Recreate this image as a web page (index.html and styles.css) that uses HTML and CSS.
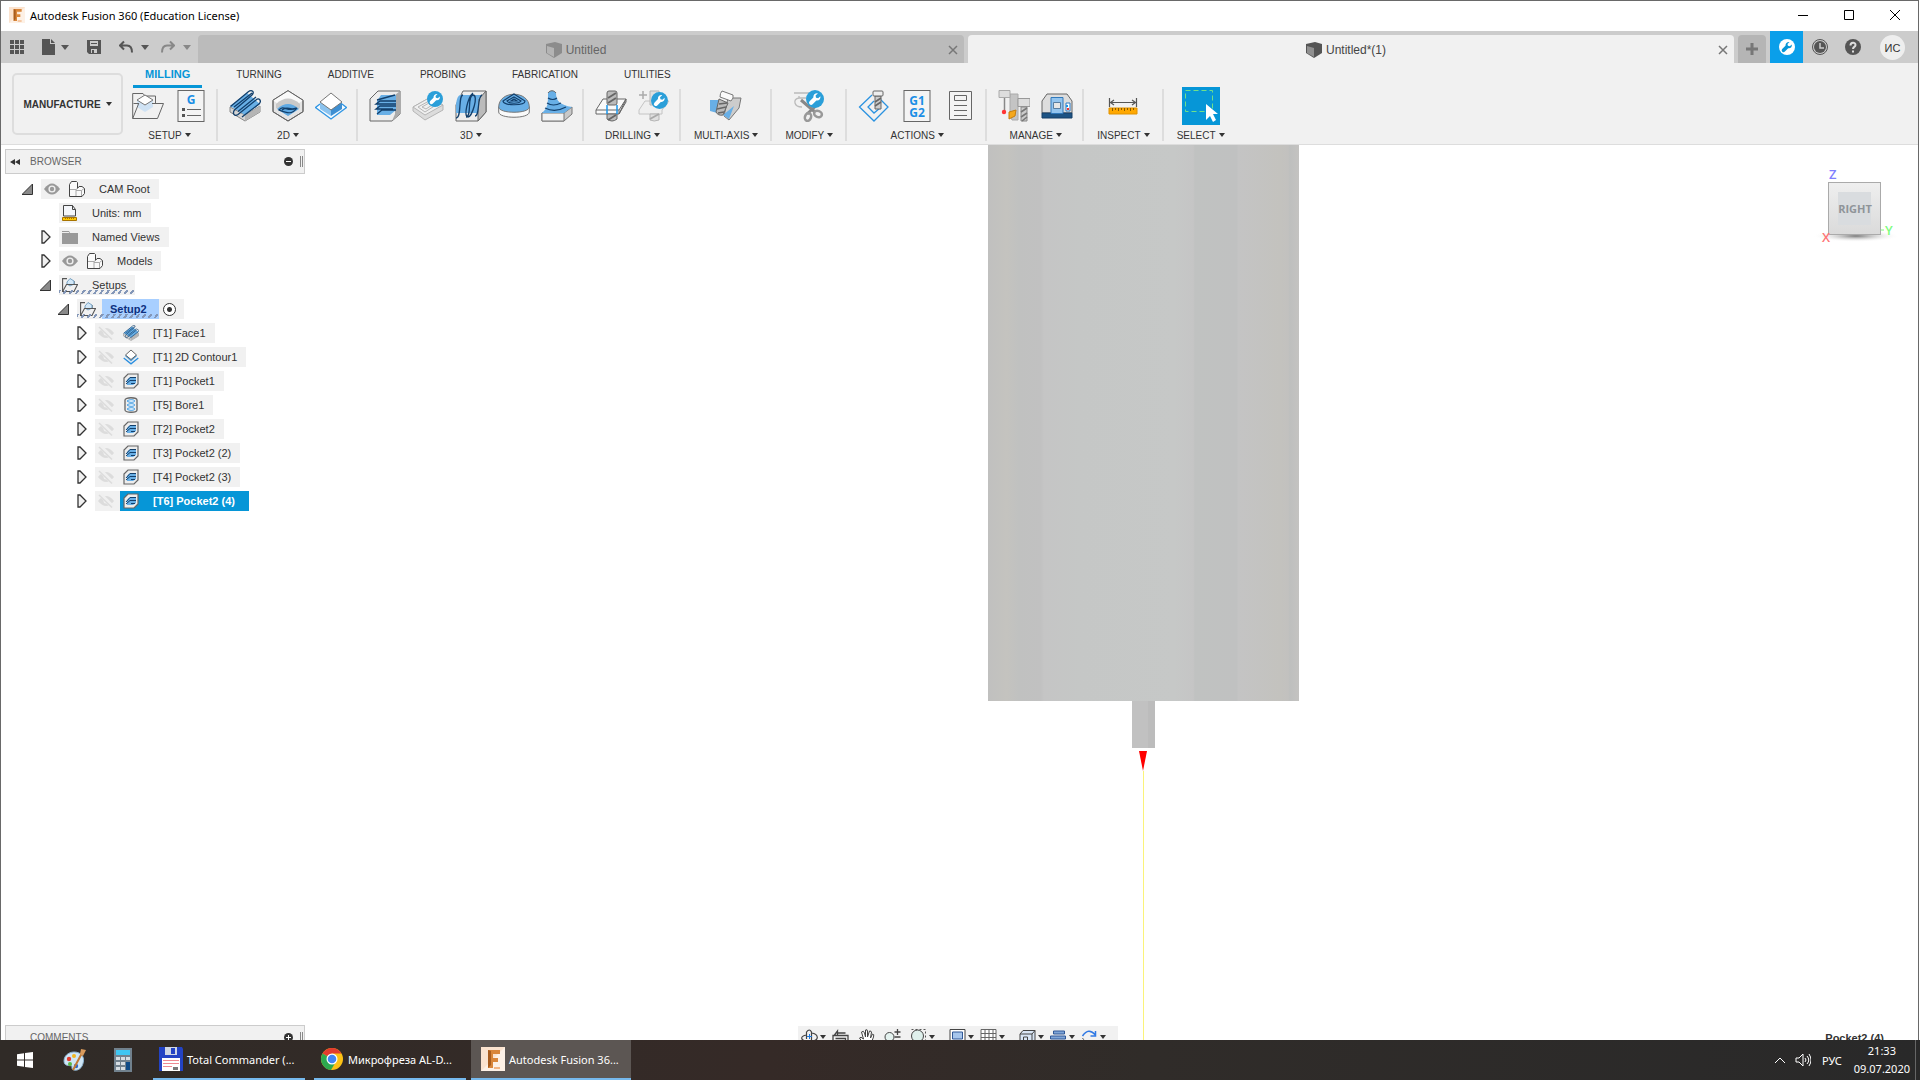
FILE: index.html
```html
<!DOCTYPE html>
<html lang="en">
<head>
    <meta charset="UTF-8">
    <meta name="viewport" content="width=device-width, initial-scale=1.0">
    <title>Autodesk Fusion 360 (Education License)</title>
    <link rel="stylesheet" href="styles.css">
</head>
<body>
    <!-- icon sprite -->
    <svg class="sprite" aria-hidden="true">
        <symbol id="i-fusion" viewBox="0 0 24 24">
            <rect width="24" height="24" fill="#fbe3cf"/>
            <path d="M0 24L24 0v24z" fill="#fdf1e6"/>
            <path d="M7 3h12v4h-7v4h5v4h-5v6H7z" fill="#d9863a"/>
            <path d="M7 3l3 1v14l-3 3z" fill="#a85c1d"/>
            <path d="M13 20h6v2h-6z" fill="#f3b684"/>
        </symbol>
        <symbol id="i-box" viewBox="0 0 16 16">
            <path d="M0 2L9 0l7 2v9l-8 5-8-5z" fill="currentColor"/>
            <path d="M1 4l7 2v9l-7-4z" fill="#fff" opacity=".35"/>
        </symbol>
        <symbol id="i-wrench" viewBox="0 0 16 16">
            <circle cx="8" cy="8" r="8" fill="#2b9fd9"/>
            <path d="M12.800 5.500l-2 1.800-1.900-.5-.4-1.900 2-1.900C8.500 2.600 6.300 4 6.500 6.700L3.200 10a1.800 1.800 0 0 0 2.700 2.600l3.300-3.300c2.600.4 4-1.700 3.600-3.800z" fill="#fff"/>
        </symbol>
        <symbol id="i-setup" viewBox="0 0 32 32">
            <path d="M.7 28.500V3.500H11l2 2.500h10.500v7" fill="none" stroke="#666"/>
            <path d="M5 10v7l8 5 8-5v-7" fill="#cfe2f4"/>
            <path d="M13 5l8 5-8 5-8-5z" fill="#fff" stroke="#777"/>
            <path d="M7 13.500H1.500M20 13.500h11.500l-6 15H.7l6-15" fill="none" stroke="#666"/>
        </symbol>
        <symbol id="i-setupsm" viewBox="0 0 16 16">
            <path d="M.6 14.400V1.600H5M12 8V4" fill="none" stroke="#555" stroke-width="1.100"/>
            <path d="M5 5l3-3.500L12 4v3L8 9 5 7z" fill="#d3e8f8" stroke="#5e8fb5" stroke-width=".8"/>
            <path d="M4.500 7.500h11l-3.500 7H.6z" fill="none" stroke="#555" stroke-width="1.100"/>
        </symbol>
        <symbol id="i-gcode" viewBox="0 0 32 32">
            <rect x="3" y=".5" width="26" height="31" fill="#f4f4f4" stroke="#666"/>
            <path d="M7 18h3v3H7zM7 24h3v3H7z" fill="#555"/>
            <path d="M12 19.500h14M12 25.500h14" stroke="#666"/>
        </symbol>
        <symbol id="i-face" viewBox="0 0 32 32">
            <path d="M1 17v5l15 9 15-9v-6L16 25z" fill="#d4d4d4" stroke="#888"/>
            <path d="M16 25v6l15-9v-6z" fill="#b5b5b5"/>
            <path d="M1 16L18 3l13 11-15 11z" fill="#68afe6"/>
            <path d="M1.500 16.500L19 2c4-3 7 0 4 3L6 19.500c-3 3-1 8 3 5L27 10c3-3 6 1 3 4L13 27M5 17L23 3M9 21.500L27 7" fill="none" stroke="#123f6b" stroke-width="1.300"/>
        </symbol>
        <symbol id="i-adaptive" viewBox="0 0 32 32">
            <path d="M16 .7l15 9.500v11.500L16 31 1 21.700V10.200z" fill="#e4e4e4" stroke="#666"/>
            <path d="M16 1l15 9.500L16 20 1 10.500z" fill="#fafafa"/>
            <path d="M4 14q12-11 24 0v4L16 26 4 18z" fill="#c9c9c9"/>
            <path d="M5 19q11-10 22 0l-11 7z" fill="#5fa9e3"/>
            <path d="M7 20c5-6 8 3 18-2-5 7-10 5-18 2zM10 20c6-5 7 1 14-2" fill="none" stroke="#123f6b" stroke-width="1.200"/>
            <path d="M16 .7l15 9.500v11.500L16 31 1 21.700V10.200z" fill="none" stroke="#666"/>
        </symbol>
        <symbol id="i-contour" viewBox="0 0 32 32">
            <path d="M5 14l-4.500 3.500L16 29l15.500-11.500L27 14" fill="#f4faff" stroke="#3196e3" stroke-width="1.300"/>
            <path d="M5 12v7l11 7V19z" fill="#8bc3ef"/>
            <path d="M27 12v7l-11 7V19z" fill="#3e8fd2"/>
            <path d="M16 3l11 9-11 8-11-8z" fill="#fff" stroke="#777"/>
        </symbol>
        <symbol id="i-contoursm" viewBox="0 0 16 16">
            <path d="M.7 9L8 14.800 15.300 9" fill="none" stroke="#2a8fe0" stroke-width="1.300"/>
            <path d="M2 7l6 5.500L14 7l-1-1H3z" fill="#4f9fdc"/>
            <path d="M8 1l5.500 5L8 10.500 2.500 6z" fill="#fff" stroke="#666"/>
        </symbol>
        <symbol id="i-pocket3d" viewBox="0 0 32 32">
            <path d="M1 31V9l8-8h22v23l-8 7z" fill="#ededed" stroke="#666"/>
            <path d="M23 31l8-7V1l-5 4v19z" fill="#aaa"/>
            <path d="M8 11l4-6h15v15l-6 5H8z" fill="#68afe6"/>
            <path d="M27 11H11l-4 3h20M27 16H11l-4 3h17M27 20H13l-5 4M8 10l18-5" fill="none" stroke="#123f6b" stroke-width="1.300"/>
        </symbol>
        <symbol id="i-pocketsm" viewBox="0 0 16 16">
            <path d="M1 15V5l4-4h10v10l-4 4z" fill="#ededed" stroke="#666" stroke-width="1.200"/>
            <path d="M4 12V7l3-3h6v6l-3 2z" fill="#68afe6"/>
            <path d="M13 4.500H7L3 9M13 7.500H7l-4 3.500M12 10.500H8" fill="none" stroke="#123f6b"/>
        </symbol>
        <symbol id="i-steep" viewBox="0 0 32 32">
            <path d="M1 21l12 9 18-10v-5L17 8 1 17z" fill="#dcdcdc" stroke="#b5b5b5"/>
            <path d="M1 17l12 8 18-10L17 8z" fill="#f0f0f0" stroke="#b5b5b5"/>
            <path d="M6 17l7 5 11-7-7-4zM10 17l4 2 6-4-3-2z" fill="none" stroke="#b5b5b5"/>
            <use href="#i-wrench" x="15" y="1" width="16" height="16"/>
        </symbol>
        <symbol id="i-parallel" viewBox="0 0 32 32">
            <path d="M1 31V15L8 1h23v21l-8 9z" fill="#ededed" stroke="#666"/>
            <path d="M23 31V10l8-9v21z" fill="#bbb" stroke="#666"/>
            <path d="M1 23V14q1-8 4-9h21q-3 3-3 9v9z" fill="#68afe6"/>
            <path d="M1 28C7 28 3 5 8 5M11 27c6 0 1-22 7-22 6 0-1 22-5 22-5 0 0-20 5-24M20 26c5 0 2-20 7-21" fill="none" stroke="#123f6b" stroke-width="1.300"/>
        </symbol>
        <symbol id="i-pencil3d" viewBox="0 0 32 32">
            <path d="M.7 17v5c0 7 30.600 7 30.600 0v-5z" fill="#fafafa" stroke="#777"/>
            <path d="M.7 17C1 0 31 0 31.300 17c0 7-30.600 7-30.600 0z" fill="#68afe6" stroke="#777"/>
            <path d="M16 4l11 7c0 5-22 5-22 0zM16 7l7 4c-2 3-12 3-14 0zM16 9l3 2h-6z" fill="none" stroke="#123f6b" stroke-width="1.200"/>
        </symbol>
        <symbol id="i-morph" viewBox="0 0 32 32">
            <path d="M1 23v8h22l8-7v-7l-8 6z" fill="#c9c9c9" stroke="#777"/>
            <path d="M1 23v8h22v-8z" fill="#f2f2f2" stroke="#777"/>
            <path d="M7 3c2-3 6-3 8 0 0 8 4 12 16 14l-8 6H1c6-5 6-10 6-20z" fill="#68afe6"/>
            <path d="M7 3c2-3 6-3 8 0" fill="none" stroke="#666"/>
            <path d="M7 8q5 3 9 0M6 13q6 4 14 0M4 18q10 5 21-1" fill="none" stroke="#123f6b" stroke-width="1.200"/>
        </symbol>
        <symbol id="i-drill" viewBox="0 0 32 32">
            <path d="M1 20L8 9h23l-7 11v4H1z" fill="#fafafa" stroke="#666"/>
            <path d="M24 20H1M24 24l7-12V9z" fill="#ccc" stroke="#666"/>
            <rect x="12" y="1" width="10" height="14" rx="2" fill="#bbb" stroke="#666"/>
            <path d="M12 24h10v5q-5 4-10 0z" fill="#bbb" stroke="#666"/>
            <path d="M13 8l8-5M13 13l8-5M13 30l8-5" stroke="#666" stroke-width="2"/>
            <path d="M12 15v9M22 15v9" stroke="#1a95ea" stroke-width="1.500"/>
        </symbol>
        <symbol id="i-drillrec" viewBox="0 0 32 32">
            <path d="M1 20l6-9h24l-7 9v4H1z" fill="#efefef" stroke="#c4c4c4"/>
            <path d="M5 1v8M1 5h8" stroke="#aaa" stroke-width="1.500"/>
            <path d="M12 1h9v14h-9zM12 24h9v6q-5 2-9 0z" fill="#e0e0e0" stroke="#b5b5b5"/>
            <path d="M12 29l9-5" stroke="#aaa" stroke-width="2"/>
            <use href="#i-wrench" x="13" y="2" width="17" height="17"/>
        </symbol>
        <symbol id="i-multi" viewBox="0 0 32 32">
            <path d="M0 10h11v14l-11-3z" fill="#68afe6"/>
            <path d="M18 8h13l-2 10-10 12-5-4z" fill="#ccc" stroke="#777"/>
            <path d="M13 25l11-9-5 13z" fill="#68afe6"/>
            <path d="M9 9l9 4-5 12q-5 1-7-3z" fill="#bbb" stroke="#666"/>
            <path d="M7 19l9-2M9 14l8-1M8 23l6-1" stroke="#666" stroke-width="1.600"/>
            <path d="M12 1l11 4q1 3-2 6L10 7q0-4 2-6z" fill="#fafafa" stroke="#777"/>
        </symbol>
        <symbol id="i-modify" viewBox="0 0 32 32">
            <path d="M1 3h15M13 8H6q-5 1-4 5t7 4M6 6v2h2" fill="none" stroke="#bbb" stroke-width="1.300"/>
            <path d="M8 10l14 12M25 14L14 24" stroke="#888" stroke-width="3"/>
            <ellipse cx="15" cy="27" rx="3" ry="4" fill="none" stroke="#999" stroke-width="2.500" transform="rotate(20 15 27)"/>
            <ellipse cx="25" cy="24" rx="4" ry="3" fill="none" stroke="#999" stroke-width="2.500" transform="rotate(20 25 24)"/>
            <use href="#i-wrench" x="13" y="0" width="18" height="18"/>
        </symbol>
        <symbol id="i-simulate" viewBox="0 0 32 32">
            <path d="M14 5L1.500 17 16 31l14-14-8-8M16 11l-6 6 6 6 6-5" fill="none" stroke="#2a92e0" stroke-width="1.300"/>
            <path d="M17 6h6v13h-6z" fill="#ccc" stroke="#666"/>
            <path d="M17 12l6-4M17 16l6-4" stroke="#666" stroke-width="1.600"/>
            <rect x="15" y="1" width="10" height="5" rx="1" fill="#eee" stroke="#666"/>
        </symbol>
        <symbol id="i-sheet" viewBox="0 0 32 32">
            <path d="M5.500 1.500h22v28h-22z" fill="#f4f4f4" stroke="#666"/>
            <path d="M10.500 5.500h12v5h-12zM10 15.500h13M10 20.500h13M10 25.500h13" fill="none" stroke="#666"/>
        </symbol>
        <symbol id="i-tools" viewBox="0 0 32 32">
            <path d="M12 4h8v26h-6l-2-5z" fill="#c4c4c4" stroke="#aaa"/>
            <path d="M1 .500h11v7H1z" fill="#ddd" stroke="#aaa"/>
            <path d="M6.500 8v13" stroke="#888" stroke-width="1.500"/>
            <circle cx="6" cy="22" r="2.200" fill="#ff3434"/>
            <path d="M11 22l7-2 -1 6-6 3z" fill="#f5a81c" stroke="#c47d10"/>
            <path d="M20 8.500h12v8H20z" fill="#ddd" stroke="#999"/>
            <path d="M23 17h6v14h-6z" fill="#ccc" stroke="#888"/>
            <path d="M23 22l6-4M23 27l6-4M24 31l5-4" stroke="#777" stroke-width="1.600"/>
        </symbol>
        <symbol id="i-machine" viewBox="0 0 32 32">
            <path d="M1 23V11l5-7h20l5 7v12z" fill="#ddd" stroke="#666"/>
            <path d="M1 23h30v5H1z" fill="#1d5384" stroke="#173f66"/>
            <path d="M10 7.500h12v16H10z" fill="#93c4ee" stroke="#3179bb"/>
            <path d="M12.500 12.500h7v6h-7z" fill="#e6e6e6" stroke="#5a7ea0"/>
            <path d="M25 13h4v8h-4z" fill="#fff" stroke="#2a7ac5"/>
            <path d="M25 15h2v2h-2z" fill="#1a95ea"/><path d="M26 18h2v2h-2z" fill="#e33"/>
        </symbol>
        <symbol id="i-measure" viewBox="0 0 32 32">
            <path d="M2.500 8v9M29.500 8v9M4 12.500h24M7 10l-3.500 2.500L7 15M25 10l3.500 2.500L25 15" fill="none" stroke="#555" stroke-width="1.200"/>
            <path d="M2 18h28v6H2z" fill="#ffa800" stroke="#e09200"/>
            <path d="M5.500 18v3M8.500 18v2M11.500 18v3M14.500 18v2M17.500 18v3M20.500 18v2M23.500 18v3M26.500 18v2" stroke="#8a5a00"/>
        </symbol>
        <symbol id="i-select" viewBox="0 0 38 38">
            <path d="M3.500 3.500h27v21h-27z" fill="none" stroke="#6fe08a" stroke-dasharray="5 3"/>
            <path d="M24 17v16l4-4 3 6 3-2-3-6h5z" fill="#fff"/>
        </symbol>
        <symbol id="i-eye" viewBox="0 0 16 12">
            <path d="M0 6q8-11 16 0-8 11-16 0z" fill="#999"/>
            <circle cx="8" cy="6" r="3.600" fill="#f0f0f0"/>
            <circle cx="8" cy="6" r="2.200" fill="#999"/>
        </symbol>
        <symbol id="i-eyeoff" viewBox="0 0 16 14">
            <path d="M0 7q8-10 16 0-8 10-16 0z" fill="#dcdcdc"/>
            <circle cx="8" cy="7" r="2.500" fill="#f0f0f0"/>
            <path d="M2 0l13 13" stroke="#f0f0f0" stroke-width="4"/>
            <path d="M1 1l13 12.500" stroke="#dcdcdc" stroke-width="1.500"/>
        </symbol>
        <symbol id="i-comp" viewBox="0 0 16 16">
            <path d="M.5 15.500v-12l2-3h5l1 1v6l1.500-2h3l2.500 2v5l-2.500 3z" fill="#fafafa" stroke="#444"/>
            <path d="M1 8.500h6v6.500M7 8.500l1.500-1M7 9.500h5.500l2.500-2M12.500 9.500v5.500" fill="none" stroke="#aaa"/>
        </symbol>
        <symbol id="i-units" viewBox="0 0 16 16">
            <path d="M1.500 11V.500h9l3 4V11z" fill="#f4f6fa" stroke="#444"/>
            <path d="M10.500.500v4h3" fill="none" stroke="#444"/>
            <path d="M.5 12.500h14v3H.5z" fill="#ffc800" stroke="#a87400"/>
            <path d="M3.500 13v1M5.500 13v1M7.500 13v1M9.500 13v1M11.500 13v1" stroke="#a87400"/>
        </symbol>
        <symbol id="i-folder" viewBox="0 0 16 14">
            <path d="M0 1h7l1 2h8v11H0z" fill="#999"/><path d="M0 2.500h7" stroke="#eee"/>
        </symbol>
        <symbol id="i-bore" viewBox="0 0 16 16">
            <path d="M2 3c0-3 12-3 12 0v10c0 3-12 3-12 0z" fill="#eee" stroke="#666" stroke-width="1.300"/>
            <path d="M4 4c3 2 6 2 8 0-2-2-5-2-8 0zM4 8c3 2 6 2 8 0-2-2-5-2-8 0zM4 12c3 2 6 2 8 0-2-2-5-2-8 0z" fill="#cfe8fb" stroke="#4ca3e6"/>
        </symbol>
        <symbol id="i-open" viewBox="0 0 11 11">
            <path d="M10.500 0v10.500H0z" fill="#8a8a8a" stroke="#333"/>
        </symbol>
        <symbol id="i-closed" viewBox="0 0 10 14">
            <path d="M1 1h2l6 6-6 6H1z" fill="#f0f0f0" stroke="#333" stroke-width="1.300"/>
        </symbol>
        <symbol id="i-undo" viewBox="0 0 14 13">
            <path d="M5 1L1 5l4 4M1 5h7q5 0 5 7" fill="none" stroke="currentColor" stroke-width="2"/>
        </symbol>
    </svg>

    <div class="window">
        <header class="titlebar">
            <svg class="app-icon"><use href="#i-fusion"/></svg>
            <h1>Autodesk Fusion 360 (Education License)</h1>
            <div class="window-buttons">
                <button aria-label="Minimize"><svg viewBox="0 0 10 10"><path d="M0 5.500h10"/></svg></button>
                <button aria-label="Maximize"><svg viewBox="0 0 10 10"><path d="M.5.500h9v9h-9z"/></svg></button>
                <button aria-label="Close"><svg viewBox="0 0 10 10"><path d="M0 0l10 10M10 0L0 10"/></svg></button>
            </div>
        </header>

        <div class="docbar">
            <div class="quick">
                <button aria-label="Data panel"><svg class="q14" viewBox="0 0 14 14"><path d="M0 0h4v4H0zM5 0h4v4H5zM10 0h4v4h-4zM0 5h4v4H0zM5 5h4v4H5zM10 5h4v4h-4zM0 10h4v4H0zM5 10h4v4H5zM10 10h4v4h-4z" fill="#555"/></svg></button>
                <button class="q-file" aria-label="File"><svg class="q14" viewBox="0 0 14 16"><path d="M0 0h8v5h5v11H0zM9 0l4 4H9z" fill="#555"/></svg><i class="caret"></i></button>
                <button class="q-save" aria-label="Save"><svg class="q14" viewBox="0 0 14 14"><path d="M0 0h14v14H2l-2-2z" fill="#555"/><path d="M3 1h8v5H3zM4 9h6v4H4z" fill="#ccc"/><path d="M5 10h2v3H5zM4 3h6v1H4z" fill="#555"/></svg></button>
                <button class="q-undo" aria-label="Undo"><svg class="q14"><use href="#i-undo"/></svg><i class="caret"></i></button>
                <button class="q-redo" aria-label="Redo"><svg class="q14"><use href="#i-undo"/></svg><i class="caret"></i></button>
            </div>
            <div class="doc-tab">
                <a href="#"><svg><use href="#i-box"/></svg>Untitled</a>
                <button aria-label="Close Untitled"><svg viewBox="0 0 10 10"><path d="M1 1l8 8M9 1L1 9"/></svg></button>
            </div>
            <div class="doc-tab active">
                <a href="#"><svg><use href="#i-box"/></svg>Untitled*(1)</a>
                <button aria-label="Close Untitled (1)"><svg viewBox="0 0 10 10"><path d="M1 1l8 8M9 1L1 9"/></svg></button>
            </div>
            <button class="new-tab" aria-label="New design"><svg viewBox="0 0 14 14"><path d="M7 1v12M1 7h12" stroke="#777" stroke-width="3"/></svg></button>
            <div class="account">
                <button class="ext" aria-label="Extensions"><svg viewBox="0 0 16 16"><circle cx="8" cy="8" r="8" fill="#fff"/><path d="M12.800 5.500l-2 1.800-1.900-.5-.4-1.900 2-1.900C8.500 2.600 6.300 4 6.500 6.700L3.200 10a1.800 1.800 0 0 0 2.700 2.600l3.300-3.300c2.600.4 4-1.700 3.600-3.800z" fill="#0696d7"/></svg></button>
                <button aria-label="Job status"><svg viewBox="0 0 16 16"><circle cx="8" cy="8" r="7.500" fill="none" stroke="#555"/><circle cx="8" cy="8" r="6" fill="#555"/><path d="M8 4v5h4" fill="none" stroke="#ccc" stroke-width="1.500"/></svg></button>
                <button aria-label="Help"><svg viewBox="0 0 16 16"><circle cx="8" cy="8" r="8" fill="#555"/><path d="M5.500 6.500c0-3.500 5-3.500 5-.5 0 2-2.500 1.800-2.500 4M8 11.500v2" fill="none" stroke="#ddd" stroke-width="2"/></svg></button>
                <button class="avatar">ИС</button>
            </div>
        </div>

        <div class="ribbon">
            <button class="workspace">MANUFACTURE<i class="caret"></i></button>
            <div class="ribbon-main">
                <nav class="ribbon-tabs">
                    <a href="#" class="active">MILLING</a>
                    <a href="#">TURNING</a>
                    <a href="#">ADDITIVE</a>
                    <a href="#">PROBING</a>
                    <a href="#">FABRICATION</a>
                    <a href="#">UTILITIES</a>
                </nav>
                <div class="groups">
                    <div class="group">
                        <div class="tools">
                            <button aria-label="Setup"><svg><use href="#i-setup"/></svg></button>
                            <button aria-label="NC program"><svg viewBox="0 0 32 32"><use href="#i-gcode"/><text x="16" y="14" class="code-text">G</text></svg></button>
                        </div>
                        <button class="group-label">SETUP<i class="caret"></i></button>
                    </div>
                    <div class="group">
                        <div class="tools">
                            <button aria-label="Face"><svg><use href="#i-face"/></svg></button>
                            <button aria-label="2D adaptive"><svg><use href="#i-adaptive"/></svg></button>
                            <button aria-label="2D contour"><svg><use href="#i-contour"/></svg></button>
                        </div>
                        <button class="group-label">2D<i class="caret"></i></button>
                    </div>
                    <div class="group">
                        <div class="tools">
                            <button aria-label="Pocket clearing"><svg><use href="#i-pocket3d"/></svg></button>
                            <button aria-label="Steep and shallow"><svg><use href="#i-steep"/></svg></button>
                            <button aria-label="Parallel"><svg><use href="#i-parallel"/></svg></button>
                            <button aria-label="Scallop"><svg><use href="#i-pencil3d"/></svg></button>
                            <button aria-label="Contour"><svg><use href="#i-morph"/></svg></button>
                        </div>
                        <button class="group-label">3D<i class="caret"></i></button>
                    </div>
                    <div class="group">
                        <div class="tools">
                            <button aria-label="Drill"><svg><use href="#i-drill"/></svg></button>
                            <button aria-label="Hole recognition"><svg><use href="#i-drillrec"/></svg></button>
                        </div>
                        <button class="group-label">DRILLING<i class="caret"></i></button>
                    </div>
                    <div class="group single">
                        <div class="tools"><button aria-label="Swarf"><svg><use href="#i-multi"/></svg></button></div>
                        <button class="group-label">MULTI-AXIS<i class="caret"></i></button>
                    </div>
                    <div class="group single">
                        <div class="tools"><button aria-label="Trim"><svg><use href="#i-modify"/></svg></button></div>
                        <button class="group-label">MODIFY<i class="caret"></i></button>
                    </div>
                    <div class="group">
                        <div class="tools">
                            <button aria-label="Simulate"><svg><use href="#i-simulate"/></svg></button>
                            <button aria-label="Post process"><svg viewBox="0 0 32 32"><rect x="3" y=".5" width="26" height="31" fill="#f4f4f4" stroke="#666"/><text x="16" y="15" class="code-text">G1</text><text x="16" y="27" class="code-text">G2</text></svg></button>
                            <button aria-label="Setup sheet"><svg><use href="#i-sheet"/></svg></button>
                        </div>
                        <button class="group-label">ACTIONS<i class="caret"></i></button>
                    </div>
                    <div class="group">
                        <div class="tools">
                            <button aria-label="Tool library"><svg><use href="#i-tools"/></svg></button>
                            <button aria-label="Machine library"><svg><use href="#i-machine"/></svg></button>
                        </div>
                        <button class="group-label">MANAGE<i class="caret"></i></button>
                    </div>
                    <div class="group single">
                        <div class="tools"><button aria-label="Measure"><svg><use href="#i-measure"/></svg></button></div>
                        <button class="group-label">INSPECT<i class="caret"></i></button>
                    </div>
                    <div class="group single">
                        <div class="tools"><button class="selected" aria-label="Select"><svg><use href="#i-select"/></svg></button></div>
                        <button class="group-label">SELECT<i class="caret"></i></button>
                    </div>
                </div>
            </div>
        </div>

        <main class="canvas">
            <!-- tool holder, cutter and Z axis -->
            <svg class="model" viewBox="0 0 312 895" aria-hidden="true">
                <defs>
                    <linearGradient id="holder">
                        <stop offset="0" stop-color="#c0c0bf"/>
                        <stop offset=".06" stop-color="#c4c3bf"/>
                        <stop offset=".1" stop-color="#c0c1c0"/>
                        <stop offset=".17" stop-color="#c1c1c1"/>
                        <stop offset=".18" stop-color="#c5c5c5"/>
                        <stop offset=".3" stop-color="#c5c7c6"/>
                        <stop offset=".6" stop-color="#c6c8c7"/>
                        <stop offset=".66" stop-color="#c5c5c5"/>
                        <stop offset=".665" stop-color="#c0c2c1"/>
                        <stop offset=".8" stop-color="#c0c1c1"/>
                        <stop offset=".805" stop-color="#c4c4c4"/>
                        <stop offset=".94" stop-color="#c3c2be"/>
                        <stop offset=".965" stop-color="#c2c1bf"/>
                        <stop offset=".97" stop-color="#bebfbe"/>
                        <stop offset="1" stop-color="#c4c3c1"/>
                    </linearGradient>
                </defs>
                <path d="M0 0h311v556H0z" fill="url(#holder)"/>
                <path d="M144 556h23v47h-23z" fill="#c1c1c1"/>
                <path d="M160 556h7v47h-7z" fill="#bcbcbc"/>
                <path d="M155.500 626v269" stroke="#fbf37a"/>
                <path d="M151 606h8l-4 20z" fill="#f00"/>
            </svg>

            <svg class="viewcube" viewBox="0 0 90 90" aria-label="View cube">
                <defs>
                    <linearGradient id="cube" x2="0" y2="1"><stop stop-color="#efefef"/><stop offset="1" stop-color="#dadada"/></linearGradient>
                    <radialGradient id="shade"><stop stop-color="#777"/><stop offset="1" stop-color="#fff" stop-opacity="0"/></radialGradient>
                </defs>
                <ellipse cx="46" cy="76" rx="43" ry="6" fill="url(#shade)"/>
                <rect x="18.500" y="22.500" width="52" height="52" fill="url(#cube)" stroke="#aaa"/>
                <rect x="28" y="32" width="33" height="33" fill="#d9dcdf"/>
                <text x="45" y="53" class="cube-face">RIGHT</text>
                <text x="19" y="19" class="axis-z">Z</text>
                <text x="12" y="82" class="axis-x">X</text>
                <text x="75" y="75" class="axis-y">Y</text>
                <path d="M71 70h3" stroke="#7dfc7d"/>
            </svg>

            <aside class="browser">
                <div class="panel-head">
                    <svg class="rewind" viewBox="0 0 10 6"><path d="M5 0v6L0 3zM10 0v6L5 3z" fill="#333"/></svg>
                    <h2>BROWSER</h2>
                    <button aria-label="Collapse"><svg viewBox="0 0 9 9"><circle cx="4.500" cy="4.500" r="4.500" fill="#333"/><path d="M2 4.500h5" stroke="#fff"/></svg></button>
                    <span class="grip"></span>
                </div>
                <ul class="tree">
                    <li>
                        <div class="node">
                            <button class="toggle" aria-label="Collapse CAM Root"><svg class="open"><use href="#i-open"/></svg></button>
                            <span class="row"><svg><use href="#i-eye"/></svg><svg><use href="#i-comp"/></svg><span class="name">CAM Root</span></span>
                        </div>
                        <ul>
                            <li><div class="node"><span class="toggle"></span><span class="row"><svg><use href="#i-units"/></svg><span class="name">Units: mm</span></span></div></li>
                            <li><div class="node"><button class="toggle" aria-label="Expand Named Views"><svg><use href="#i-closed"/></svg></button><span class="row"><svg><use href="#i-folder"/></svg><span class="name">Named Views</span></span></div></li>
                            <li><div class="node"><button class="toggle" aria-label="Expand Models"><svg><use href="#i-closed"/></svg></button><span class="row"><svg><use href="#i-eye"/></svg><svg><use href="#i-comp"/></svg><span class="name">Models</span></span></div></li>
                            <li>
                                <div class="node"><button class="toggle" aria-label="Collapse Setups"><svg class="open"><use href="#i-open"/></svg></button><span class="row"><span class="hatched"><svg><use href="#i-setupsm"/></svg><span class="name">Setups</span></span></span></div>
                                <ul>
                                    <li>
                                        <div class="node"><button class="toggle" aria-label="Collapse Setup2"><svg class="open"><use href="#i-open"/></svg></button><span class="row"><span class="hatched"><svg><use href="#i-setupsm"/></svg><span class="name current">Setup2</span></span><label class="activate"><input type="radio" name="setup" aria-label="Activate Setup2" checked></label></span></div>
                                        <ul>
                                            <li><div class="node"><button class="toggle" aria-label="Expand Face1"><svg><use href="#i-closed"/></svg></button><span class="row"><svg><use href="#i-eyeoff"/></svg><svg><use href="#i-face"/></svg><span class="name">[T1] Face1</span></span></div></li>
                                            <li><div class="node"><button class="toggle" aria-label="Expand 2D Contour1"><svg><use href="#i-closed"/></svg></button><span class="row"><svg><use href="#i-eyeoff"/></svg><svg><use href="#i-contoursm"/></svg><span class="name">[T1] 2D Contour1</span></span></div></li>
                                            <li><div class="node"><button class="toggle" aria-label="Expand Pocket1"><svg><use href="#i-closed"/></svg></button><span class="row"><svg><use href="#i-eyeoff"/></svg><svg><use href="#i-pocketsm"/></svg><span class="name">[T1] Pocket1</span></span></div></li>
                                            <li><div class="node"><button class="toggle" aria-label="Expand Bore1"><svg><use href="#i-closed"/></svg></button><span class="row"><svg><use href="#i-eyeoff"/></svg><svg><use href="#i-bore"/></svg><span class="name">[T5] Bore1</span></span></div></li>
                                            <li><div class="node"><button class="toggle" aria-label="Expand Pocket2"><svg><use href="#i-closed"/></svg></button><span class="row"><svg><use href="#i-eyeoff"/></svg><svg><use href="#i-pocketsm"/></svg><span class="name">[T2] Pocket2</span></span></div></li>
                                            <li><div class="node"><button class="toggle" aria-label="Expand Pocket2 (2)"><svg><use href="#i-closed"/></svg></button><span class="row"><svg><use href="#i-eyeoff"/></svg><svg><use href="#i-pocketsm"/></svg><span class="name">[T3] Pocket2 (2)</span></span></div></li>
                                            <li><div class="node"><button class="toggle" aria-label="Expand Pocket2 (3)"><svg><use href="#i-closed"/></svg></button><span class="row"><svg><use href="#i-eyeoff"/></svg><svg><use href="#i-pocketsm"/></svg><span class="name">[T4] Pocket2 (3)</span></span></div></li>
                                            <li><div class="node"><button class="toggle" aria-label="Expand Pocket2 (4)"><svg><use href="#i-closed"/></svg></button><span class="row"><svg><use href="#i-eyeoff"/></svg><span class="picked"><svg><use href="#i-pocketsm"/></svg><span class="name">[T6] Pocket2 (4)</span></span></span></div></li>
                                        </ul>
                                    </li>
                                </ul>
                            </li>
                        </ul>
                    </li>
                </ul>
            </aside>

            <div class="panel-head comments">
                <h2>COMMENTS</h2>
                <button aria-label="Add comment"><svg viewBox="0 0 9 9"><circle cx="4.500" cy="4.500" r="4.500" fill="#333"/><path d="M2 4.500h5M4.500 2v5" stroke="#fff"/></svg></button>
                <span class="grip"></span>
            </div>

            <div class="navbar">
                <button aria-label="Orbit"><svg viewBox="0 0 16 16"><path d="M5 6C-2 7-1 12 6 12M10 4c7 1 8 7 1 8M5 10V3q3-4 5 0v11" fill="none" stroke="#444" stroke-width="1.200"/><path d="M8 5v5M5.500 7.500h5" stroke="#1a78e0"/></svg><i class="caret"></i></button>
                <button class="plain" aria-label="Look at"><svg viewBox="0 0 16 16"><path d="M.5 6.500h15v9H.5zM3 9.500h10v6M2 6l3-4v2h8M5 2v4" fill="none" stroke="#444" stroke-width="1.300"/></svg></button>
                <button class="plain" aria-label="Pan"><svg viewBox="0 0 16 16"><path d="M5 15L1 9q1-2 4 1L3 3q2-2 3 1l1 4V1q2-1 2 1v6l2-6q2 0 2 1l-1 6 2-4q2 0 1 3l-3 8" fill="#fff" stroke="#444"/></svg></button>
                <button class="plain" aria-label="Zoom"><svg viewBox="0 0 16 16"><circle cx="5" cy="8" r="4.500" fill="#e4f2ef" stroke="#444"/><path d="M13 0v6M10 3h6M10 8h6M2 12l-2 4" stroke="#444" stroke-width="1.300"/></svg></button>
                <button aria-label="Fit"><svg viewBox="0 0 16 16"><circle cx="7" cy="7" r="6" fill="#dff0ec" stroke="#444"/><path d="M1 .500h14v14" fill="none" stroke="#555" stroke-dasharray="2 2"/></svg><i class="caret"></i></button>
                <button class="gap-before" aria-label="Display settings"><svg viewBox="0 0 16 16"><path d="M.5.500h15v12H.5zM5 15h6" fill="#fff" stroke="#444"/><path d="M3 3h10v7H3z" fill="#a7c6ec" stroke="#2f5796"/></svg><i class="caret"></i></button>
                <button aria-label="Grid"><svg viewBox="0 0 16 16"><path d="M.5.500h15v15H.5zM.5 4.500h15M.5 8.500h15M.5 12.500h15M4.500.500v15M8.500.500v15M12.500.500v15" fill="#fff" stroke="#666"/></svg><i class="caret"></i></button>
                <button class="gap-before" aria-label="Object visibility"><svg viewBox="0 0 16 16"><path d="M.5 5l3-3.500h12v10l-3 4H.5z" fill="#d9e6f6" stroke="#444"/><path d="M.5 5h12v10M12.500 5l3-3.500M4 12V8h4v4" fill="none" stroke="#444"/></svg><i class="caret"></i></button>
                <button aria-label="Section"><svg viewBox="0 0 16 16"><path d="M3 2h11v3H3zM0 7h15v3H0zM3 12h11v3H3z" fill="#7ea5d8" stroke="#2f5796"/></svg><i class="caret"></i></button>
                <button aria-label="Refresh"><svg viewBox="0 0 16 16"><path d="M1 7q6-9 13-1M14 2v5H9" fill="none" stroke="#2f78e4" stroke-width="1.500"/><path d="M1 9q6 9 13 1" fill="none" stroke="#555" stroke-dasharray="2 2"/></svg><i class="caret"></i></button>
            </div>
            <p class="status">Pocket2 (4)</p>
        </main>
    </div>

    <footer class="taskbar">
        <button class="launch start" aria-label="Start"><svg viewBox="0 0 16 16"><path d="M0 2.200L7 1.200v6.300H0zM8 1L16 0v7.500H8zM0 8.500h7v6.300L0 13.800zM8 8.500h8V16l-8-1z" fill="#fff"/></svg></button>
        <button class="launch" aria-label="Paint"><svg viewBox="0 0 24 24"><path d="M2 13C2 6 10 2 17 5c6 3 5 9 3 13-3 6-11 5-10 1 1-3-8 1-8-6z" fill="#cfe6f6" stroke="#8db5d3"/><circle cx="7" cy="11" r="2.200" fill="#e23b2e"/><circle cx="12" cy="8" r="2" fill="#f2b71f"/><circle cx="8" cy="16" r="2" fill="#58b947"/><circle cx="14" cy="18" r="2.200" fill="#2c66c9"/><path d="M20 5L11 22" stroke="#c17a36" stroke-width="2"/><path d="M18 6l1-5 5 1-3 6z" fill="#d99a5b"/></svg></button>
        <button class="launch" aria-label="Calculator"><svg viewBox="0 0 24 24"><path d="M3 0h18v24H3z" fill="#71818d"/><path d="M5 2h14v5H5z" fill="#3fc6f2"/><path d="M5 9h4v3H5zM10 9h4v3h-4zM15 9h4v3h-4zM5 14h4v3H5zM10 14h4v3h-4zM5 19h4v3H5zM10 19h4v3h-4z" fill="#d6dde2"/><path d="M15 14h4v8h-4z" fill="#0e4a86"/></svg></button>
        <a href="#" class="task"><svg viewBox="0 0 24 24"><path d="M0 0h23l1 2v22H0z" fill="#2343c4"/><path d="M6 0h12v8H6z" fill="#cfd6e4"/><path d="M12 1h4v6h-4z" fill="#2343c4"/><path d="M3 11h18v13H3z" fill="#fff"/><path d="M4 13.500h16M4 16.500h16M4 19.500h9" stroke="#ee8a92"/><path d="M14 20h5v3h-5z" fill="#777"/></svg><span>Total Commander (...</span></a>
        <a href="#" class="task"><svg viewBox="0 0 24 24"><circle cx="12" cy="12" r="11" fill="#fbc116"/><path d="M12 12L2.500 6.500A11 11 0 0 1 21.500 6.500H12z" fill="#e33b2e"/><path d="M2.500 6.500A11 11 0 0 0 11 23l5-8.500-4-2.500z" fill="#2da94f"/><circle cx="12" cy="12" r="5.500" fill="#fff"/><circle cx="12" cy="12" r="4.300" fill="#4285f4"/></svg><span>Микрофреза AL-D...</span></a>
        <a href="#" class="task active"><svg><use href="#i-fusion"/></svg><span>Autodesk Fusion 36...</span></a>
        <div class="tray">
            <button aria-label="Hidden icons"><svg class="chev" viewBox="0 0 12 8"><path d="M1 7l5-5 5 5"/></svg></button>
            <button aria-label="Volume"><svg class="vol" viewBox="0 0 16 14"><path d="M1 5h3l4-4v12L4 9H1zM10 5q2 2 0 4M12 3q3.500 4 0 8M14 1q4 6 0 12"/></svg></button>
            <button>РУС</button>
            <time datetime="2020-07-09T21:33">21:33<br>09.07.2020</time>
        </div>
    </footer>
</body>
</html>
```

FILE: styles.css
```css
* {
    margin: 0;
    padding: 0;
    box-sizing: border-box;
}
body {
    height: 100vh;
    display: flex;
    flex-direction: column;
    overflow: hidden;
    background: #fff;
    color: #333;
    font-family: "Liberation Sans", Arial, sans-serif;
    font-size: 11px;
}
button {
    background: none;
    border: none;
    font: inherit;
    color: inherit;
    display: flex;
    align-items: center;
    cursor: pointer;
}
a {
    color: inherit;
    text-decoration: none;
}
ul {
    list-style: none;
}
svg {
    display: block;
    flex: none;
}
.sprite {
    position: absolute;
    width: 0;
    height: 0;
}
.caret {
    border: 4px solid transparent;
    border-top: 5px solid currentColor;
    border-bottom: none;
    flex: none;
}
.window {
    flex: 1;
    min-height: 0;
    display: flex;
    flex-direction: column;
    border: 1px solid #696969;
    border-bottom: none;
    margin-right: 1px;
}

/* title bar */
.titlebar {
    height: 30px;
    display: flex;
    align-items: center;
    padding: 0 0 2px 8px;
    background: #fff;
    color: #000;
}
.app-icon {
    width: 16px;
    height: 16px;
}
.titlebar h1 {
    flex: 1;
    margin-left: 5px;
    font: 11px "Noto Sans", sans-serif;
}
.window-buttons {
    display: flex;
}
.window-buttons button {
    width: 46px;
    height: 28px;
    justify-content: center;
}
.window-buttons svg {
    width: 10px;
    height: 10px;
    fill: none;
    stroke: #000;
}

/* document tabs */
.docbar {
    height: 32px;
    display: flex;
    align-items: flex-end;
    gap: 4px;
    background: #ccc;
}
.quick {
    width: 193px;
    height: 32px;
    display: flex;
    align-items: center;
    padding-left: 9px;
    color: #555;
}
.q14 {
    width: 14px;
    height: 16px;
}
.quick button {
    gap: 5px;
}
.q-file, .q-save, .q-undo {
    margin-left: 18px;
}
.quick .q-undo, .quick .q-redo {
    gap: 8px;
}
.quick .q-redo {
    margin-left: 12px;
    color: #888;
}
.q-redo svg {
    transform: scaleX(-1);
}
.doc-tab {
    flex: 1;
    height: 28px;
    display: flex;
    align-items: center;
    padding: 2px 6px 0;
    background: #bbb;
    color: #666;
    border-radius: 4px 4px 0 0;
    font-size: 12px;
}
.doc-tab a {
    flex: 1;
    display: flex;
    justify-content: center;
    align-items: center;
    gap: 4px;
}
.doc-tab a svg {
    width: 16px;
    height: 16px;
    color: #8c8c8c;
}
.doc-tab button svg {
    width: 10px;
    height: 10px;
    stroke: #777;
    stroke-width: 1.5;
}
.doc-tab.active {
    background: #f1f1f1;
    color: #444;
}
.doc-tab.active a svg {
    color: #555;
}
.new-tab {
    width: 28px;
    height: 28px;
    justify-content: center;
    background: #b5b5b5;
    border-radius: 4px 4px 0 0;
}
.new-tab svg {
    width: 14px;
    height: 14px;
}
.account {
    height: 32px;
    display: flex;
    padding-right: 13px;
}
.account button {
    width: 33px;
    justify-content: center;
}
.account svg {
    width: 16px;
    height: 16px;
}
.account .ext {
    background: #0a9fea;
}
.account .avatar {
    width: 25px;
    height: 25px;
    margin: 4px 0 0 11px;
    border-radius: 50%;
    background: #eee;
}

/* ribbon */
.ribbon {
    height: 82px;
    display: flex;
    background: #f1f1f1;
    border-bottom: 1px solid #ddd;
    font-size: 10px;
}
.workspace {
    width: 111px;
    height: 62px;
    margin: 10px 0 0 11px;
    justify-content: center;
    gap: 5px;
    border: 2px solid #ddd;
    border-radius: 5px;
    font-weight: bold;
}
.workspace .caret, .group-label .caret {
    border-width: 4px 3px 0;
}
.ribbon-tabs {
    display: flex;
    gap: 22px;
    padding-left: 10px;
}
.ribbon-tabs a {
    height: 25px;
    line-height: 23px;
    padding: 0 12px;
    border-bottom: 3px solid transparent;
}
.ribbon-tabs .active {
    color: #0696d7;
    border-color: #0696d7;
    font-size: 11px;
    font-weight: bold;
}
.groups {
    display: flex;
    margin-top: -1px;
}
.group {
    display: flex;
    flex-direction: column;
    align-items: center;
    padding: 0 9px 0 11px;
    background: linear-gradient(#ddd, #ddd) right 2px / 2px 52px no-repeat;
    border-right: 2px solid transparent;
    background-origin: border-box;
}
.group:first-child {
    padding: 0 9px;
}
.group:last-child {
    background: none;
}
.group.single {
    padding: 0 12px 0 13px;
}
.tools {
    height: 38px;
    display: flex;
    align-items: center;
    gap: 11px;
}
.tools svg {
    width: 32px;
    height: 32px;
}
.tools .selected {
    background: #0696d7;
}
.tools .selected svg {
    width: 38px;
    height: 38px;
}
.group-label {
    height: 20px;
    gap: 3px;
}
.code-text {
    fill: #1a8ee6;
    font: bold 12px "Noto Sans", sans-serif;
    text-anchor: middle;
}

/* canvas */
.canvas {
    flex: 1;
    position: relative;
    overflow: hidden;
    background: #fff;
}
.model {
    position: absolute;
    left: 987px;
    top: 0;
    width: 312px;
    height: 895px;
}
.viewcube {
    position: absolute;
    right: 18px;
    top: 15px;
    width: 90px;
    height: 90px;
}
.viewcube text {
    font: 600 13px "Open Sans", sans-serif;
}
.viewcube .cube-face {
    font: bold 11px "Open Sans", sans-serif;
    fill: #8f9499;
    text-anchor: middle;
}
.axis-z {
    fill: #8080ff;
}
.axis-x {
    fill: #ff7575;
}
.axis-y {
    fill: #7dfc7d;
}
.panel-head {
    width: 300px;
    height: 25px;
    display: flex;
    align-items: center;
    padding: 0 1px 0 4px;
    background: #f1f1f1;
    border: 1px solid #ccc;
    color: #666;
}
.panel-head h2 {
    flex: 1;
    font-size: 10px;
    font-weight: normal;
}
.panel-head button svg {
    width: 9px;
    height: 9px;
}
.rewind {
    width: 10px;
    height: 6px;
    margin-right: 10px;
}
.grip {
    width: 3px;
    height: 11px;
    margin-left: 7px;
    border: solid #888;
    border-width: 0 1px;
}
.browser {
    position: absolute;
    left: 4px;
    top: 4px;
}
.comments {
    position: absolute;
    left: 4px;
    bottom: -10px;
    padding-left: 24px;
}
.tree {
    padding: 5px 0 0 17px;
}
.tree ul {
    padding-left: 18px;
}
.node {
    height: 20px;
    margin-bottom: 4px;
    display: flex;
}
.toggle {
    width: 19px;
}
.toggle svg {
    width: 10px;
    height: 14px;
    margin-left: 1px;
}
.toggle .open {
    width: 11px;
    height: 11px;
    margin-left: 0;
}
.row, .hatched, .picked {
    display: flex;
    align-items: center;
    background: #f1f1f1;
}
.row svg {
    width: 16px;
    height: 16px;
    margin: 0 6px 0 3px;
}
.name {
    height: 20px;
    line-height: 20px;
    padding: 0 9px 0 8px;
    white-space: nowrap;
}
.hatched {
    position: relative;
}
.hatched::after {
    content: "";
    position: absolute;
    left: 0;
    right: 0;
    bottom: 1px;
    height: 4px;
    background: repeating-linear-gradient(125deg, #8497b8 0 2px, transparent 2px 5px);
}
.name.current {
    padding-right: 12px;
    background: #a8cfff;
    color: #0c2f80;
    font-weight: bold;
}
.activate {
    display: flex;
    padding: 0 8px 0 4px;
}
.activate input {
    appearance: none;
    width: 13px;
    height: 13px;
    border: 1px solid #333;
    border-radius: 50%;
    background: radial-gradient(#333 0 2px, #fff 3px);
}
.picked {
    background: #0696d7;
    color: #fff;
    font-weight: bold;
}
.picked .name {
    padding-right: 14px;
}
.navbar {
    position: absolute;
    left: 797px;
    bottom: -8px;
    height: 22px;
    display: flex;
    padding: 0 12px 0 3px;
    gap: 6px;
    background: #f1f1f1;
}
.navbar svg {
    width: 17px;
    height: 16px;
}
.navbar button {
    gap: 2px;
}
.navbar .plain {
    margin-right: 3px;
}
.navbar .caret {
    border-width: 4px 3px 0;
}
.navbar .gap-before {
    margin-left: 8px;
}
.status {
    position: absolute;
    right: 34px;
    bottom: -4px;
    font-weight: bold;
}

/* taskbar */
.taskbar {
    height: 40px;
    display: flex;
    align-items: stretch;
    background: linear-gradient(90deg, #302b27, #352a27 40%, #302c29 60%, #292929);
    color: #fff;
    font: 11px "Noto Sans", sans-serif;
}
.launch {
    width: 49px;
    justify-content: center;
}
.launch svg {
    width: 24px;
    height: 24px;
}
.launch.start svg {
    width: 16px;
    height: 16px;
}
.task {
    width: 152px;
    display: flex;
    align-items: center;
    gap: 4px;
    margin-left: 6px;
    margin-right: 3px;
    padding-left: 6px;
    border-bottom: 2px solid #76b9ed;
    white-space: nowrap;
}
.task svg {
    width: 24px;
    height: 24px;
}
.task.active {
    width: 160px;
    margin: 0 0 0 2px;
    padding-left: 10px;
    background: #5c5653;
}
.tray {
    margin-left: auto;
    display: flex;
    align-items: center;
    padding-right: 5px;
    border-right: 1px solid #666;
    margin-right: 4px;
}
.tray svg {
    fill: none;
    stroke: #fff;
}
.chev {
    width: 12px;
    height: 8px;
    margin-right: 9px;
}
.vol {
    width: 16px;
    height: 14px;
    margin-right: 11px;
}
.tray time {
    margin-left: 12px;
    line-height: 18px;
    text-align: center;
}
```
